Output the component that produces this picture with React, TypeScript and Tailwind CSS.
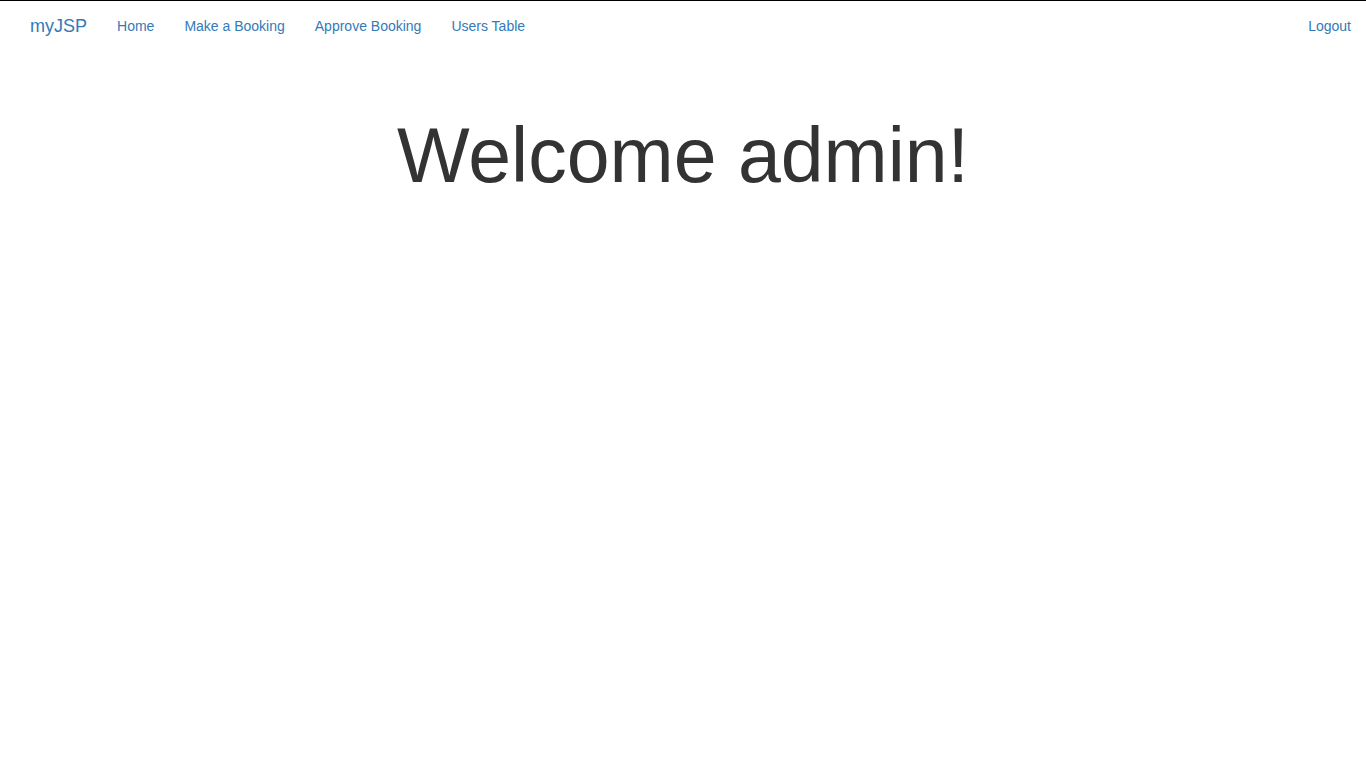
const links = ['Home', 'Make a Booking', 'Approve Booking', 'Users Table']

export default function App() {
  return (
    <div className="min-h-screen bg-white font-['Liberation_Sans',Arial,sans-serif] text-[#333]">
      {/* Navbar */}
      <nav className="flex h-[51px] items-stretch border-t border-black px-[15px]">
        <a href="#" className="flex items-center px-[15px] text-[18px] leading-[20px] text-[#337ab7]">
          myJSP
        </a>
        <ul className="flex">
          {links.map((l) => (
            <li key={l} className="flex">
              <a href="#" className="flex items-center px-[15px] text-[14px] leading-[20px] text-[#337ab7]">
                {l}
              </a>
            </li>
          ))}
        </ul>
        <div className="ml-auto -mr-[15px] flex">
          <a href="#" className="flex items-center px-[15px] text-[14px] leading-[20px] text-[#337ab7]">
            Logout
          </a>
        </div>
      </nav>

      {/* Welcome */}
      <h1 className="mt-[62px] text-center text-[77px] leading-[1.1] font-normal text-[#333]">
        Welcome admin!
      </h1>
    </div>
  )
}
